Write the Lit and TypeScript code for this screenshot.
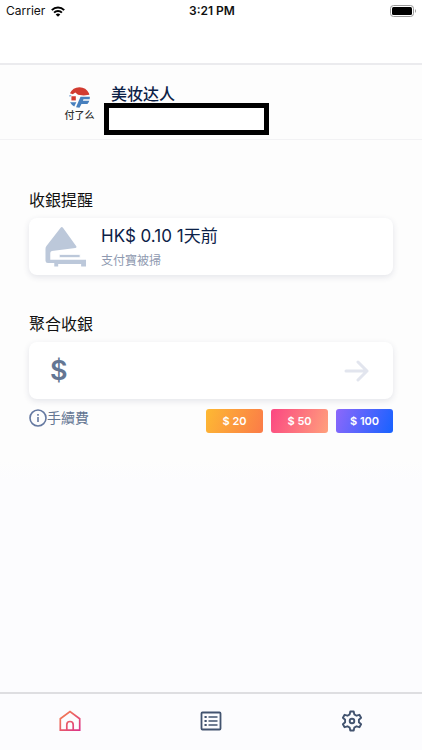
import { LitElement, html, css } from "lit";
import { customElement, state } from "lit/decorators.js";

@customElement("app-root")
export class AppRoot extends LitElement {
  @state() private amount = "";

  static styles = css`
    :host {
      display: flex;
      flex-direction: column;
      min-height: 100vh;
      background: #fcfcfe;
      color: #111;
      font-family: Inter, "Noto Sans CJK SC", sans-serif;
    }
    * { box-sizing: border-box; }
    svg { display: block; flex: none; }
    button { border: 0; padding: 0; background: none; font: inherit; cursor: pointer; }
    .status {
      display: grid;
      grid-template-columns: 1fr auto 1fr;
      align-items: center;
      height: 22px;
      padding: 0 4px 0 6px;
      background: #fff;
      font-size: 12px;
      line-height: 22px;
    }
    .carrier { display: flex; align-items: center; gap: 6px; }
    .time { font-weight: 600; }
    .battery { justify-self: end; }
    .titlebar { height: 43px; background: #fff; border-bottom: 2px solid #ebebee; }
    .merchant {
      display: flex;
      height: 75px;
      padding: 20px 0 0 64px;
      gap: 10px;
      background: #fdfdfd;
      border-bottom: 1px solid #f2f2f4;
    }
    .logo { display: flex; flex-direction: column; align-items: center; width: 31px; padding-top: 2px; }
    .logo-name { font-size: 10px; line-height: 14px; color: #333; white-space: nowrap; font-weight: 500; }
    .name { margin: 0; padding-left: 7px; font-size: 16px; line-height: 18px; font-weight: 500; color: #0c2147; }
    .masked { width: 165px; height: 32px; border: 5px solid #000; background: #fff; }
    .identity { margin-left: -1px; }
    main { flex: 1; padding: 48px 29px 0; background: linear-gradient(#fdfdfd 320px, #fcfcfe 340px); }
    .traditional { font-family: Inter, "Noto Sans CJK TC", sans-serif; }
    h2 { margin: 0 0 6px; font-size: 16px; line-height: 24px; font-weight: 400; color: #111; }
    .card {
      display: flex;
      align-items: center;
      height: 57px;
      border-radius: 8px;
      background: #fff;
      box-shadow: 0 2px 6px rgba(40, 50, 90, 0.12);
    }
    .reminder { margin-bottom: 37px; padding-left: 16px; gap: 14px; }
    .reminder p { margin: 0; }
    .reminder div { padding-top: 3px; }
    .amount { font-size: 17px; line-height: 26px; color: #0c2147; }
    .detail { font-size: 12px; line-height: 24px; color: #8e99b0; }
    .entry { padding: 0 24px 0 21px; }
    .currency { font-size: 27px; line-height: 32px; font-weight: 600; color: #647693; }
    .field {
      flex: 1;
      min-width: 0;
      margin: 0 12px;
      border: 0;
      outline: 0;
      background: transparent;
      font: inherit;
      font-size: 24px;
      color: #647693;
    }
    .quick { display: flex; align-items: flex-start; justify-content: space-between; padding-top: 9px; }
    .fee { display: flex; align-items: center; height: 20px; font-size: 14px; line-height: 20px; color: #647693; text-decoration: none; }
    .presets { display: flex; gap: 8px; padding-top: 1px; }
    .preset { width: 57px; height: 24px; border-radius: 3px; color: #fff; font-size: 11px; line-height: 24px; font-weight: 600; }
    .p20 { background: linear-gradient(110deg, #fdb933, #fb7b48); }
    .p50 { background: linear-gradient(110deg, #fb4782, #ffa07c); }
    .p100 { background: linear-gradient(110deg, #8d68fb, #1762ff); }
    .tabs { display: grid; grid-template-columns: repeat(3, 1fr); height: 58px; padding-bottom: 3px; border-top: 2px solid #dedee1; }
    .tab { display: flex; align-items: center; justify-content: center; }
  `;

  render() {
    return html`
      <header>
        <div class="status">
          <span class="carrier">Carrier
            <svg width="14" height="11" viewBox="0 0 14 11" fill="none" stroke="#000" stroke-width="2">
              <path d="M.8 4.1a8.8 8.8 0 0 1 12.4 0M3.1 6.6a5.5 5.5 0 0 1 7.8 0" />
              <path d="M7 10.8 4.7 8.5a3.3 3.3 0 0 1 4.6 0z" fill="#000" stroke="none" />
            </svg>
          </span>
          <span class="time">3:21 PM</span>
          <svg class="battery" width="28" height="12" viewBox="0 0 28 12">
            <rect x=".5" y=".5" width="23" height="11" rx="3" fill="#fff" stroke="#999" />
            <rect x="2" y="2" width="20" height="8" rx="1.5" />
            <path d="M25 4q2 2 0 4z" fill="#999" />
          </svg>
        </div>
        <div class="titlebar"></div>
        <div class="merchant">
          <div class="logo">
            <svg width="21" height="21" viewBox="0 0 20 20">
              <path d="M.9 6A10 10 0 0 1 19 6l.4 1.400L14 8.200 8.600 7.400 6 5.200 3.600 7z" fill="#d23b30" />
              <path d="M2.300 8.800h4.200v4H2.300z" fill="#d23b30" />
              <path d="M.4 7.500h2L1.700 9H.1z" fill="#8fb1d8" />
              <path d="M11 9.300h8.900l-.2 2.400h-5.900l-.6 1.300h6.200a10 10 0 0 1-1.900 3.200h-5.600L10 19.800l-3.300-.4L9.300 13zM1 14.500h6l-2 4A10 10 0 0 1 1 14.500z" fill="#477fbd" />
            </svg>
            <span class="logo-name">付了么</span>
          </div>
          <div class="identity">
            <h1 class="name">美妆达人</h1>
            <div class="masked"></div>
          </div>
        </div>
      </header>
      <main class="traditional">
        <h2>收銀提醒</h2>
        <section class="card reminder">
          <svg width="42" height="42" viewBox="0 0 43 42" fill="#bcc8da">
            <path d="M16 1.200q1.200-1.400 2.400 0L32 20.300q.8 1.400-.8 1.700L7 25.200q-1.600.4-1.600 2V34H42v7h-5v-2.500H13.500V41h-4v-3.500H3q-2.500 0-2.500-2.500V23q0-1.700 1-3z" />
            <path d="M14.500 28.500H36V32H14.500z" stroke="#fff" />
          </svg>
          <div>
            <p class="amount">HK$ 0.10 1天前</p>
            <p class="detail">支付寶被掃</p>
          </div>
        </section>
        <h2>聚合收銀</h2>
        <form class="card entry" @submit=${(e: Event) => e.preventDefault()}>
          <label class="currency" for="amount">$</label>
          <input class="field" id="amount" inputmode="decimal" autocomplete="off" .value=${this.amount}
            @input=${(e: Event) => (this.amount = (e.target as HTMLInputElement).value)} />
          <button aria-label="聚合收銀">
            <svg width="25" height="22" viewBox="0 0 25 22" fill="none" stroke="#e2e5ee" stroke-width="3" stroke-linecap="round" stroke-linejoin="round">
              <path d="M2 11h21M14 2l9 9-9 9" />
            </svg>
          </button>
        </form>
        <div class="quick">
          <a class="fee" href="#fee">
            <svg width="18" height="18" viewBox="0 0 18 18" fill="none" stroke="#6478a0" stroke-width="1.6">
              <circle cx="9" cy="9" r="8" /><path d="M9 8v5M9 5v1.700" />
            </svg>手續費</a>
          <div class="presets">
            ${[20, 50, 100].map(
              (n) => html`<button class="preset p${n}" @click=${() => (this.amount = String(n))}>$ ${n}</button>`
            )}
          </div>
        </div>
      </main>
      <nav class="tabs">
        <a class="tab" href="#home" aria-label="Home">
          <svg width="22" height="22" viewBox="0 0 22 22" fill="none" stroke="url(#warm)" stroke-width="1.700">
            <defs>
              <linearGradient id="warm" x1="0" y1="0" x2="1" y2="1">
                <stop offset="0" stop-color="#f5834c" /><stop offset="1" stop-color="#dc3388" />
              </linearGradient>
            </defs>
            <path d="M1.300 20.200V8.700L11 1.500l9.700 7.200v11.500zM7.800 20v-5.300q0-3.200 3.200-3.200t3.200 3.200V20" />
          </svg>
        </a>
        <a class="tab" href="#records" aria-label="Records">
          <svg width="22" height="20" viewBox="0 0 22 20" fill="none" stroke="#42536f" stroke-width="1.800">
            <rect x="1.500" y="1.500" width="19" height="17" rx="1" />
            <path d="M4.500 6h2.200M4.500 10h2.200M4.500 14h2.200" stroke-width="2.200" />
            <path d="M8.500 6h9M8.500 10h9M8.500 14h9" stroke-width="1.500" />
          </svg>
        </a>
        <a class="tab" href="#settings" aria-label="Settings">
          <svg width="22" height="22" viewBox="0 0 22 22" fill="none" stroke="#42536f" stroke-width="1.900" stroke-linejoin="round">
            <path d="M9.300 1.500h3.400l.6 2.900 2.200 1.300 2.900-.9 1.700 2.900-2.200 2v2.600l2.200 2-1.700 2.900-2.900-.9-2.200 1.300-.6 2.900H9.300l-.6-2.900-2.200-1.300-2.900.9-1.700-2.900 2.200-2V9.700l-2.200-2 1.700-2.900 2.900.9 2.200-1.300z" />
            <circle cx="11" cy="11" r="2.300" />
          </svg>
        </a>
      </nav>
    `;
  }
}
